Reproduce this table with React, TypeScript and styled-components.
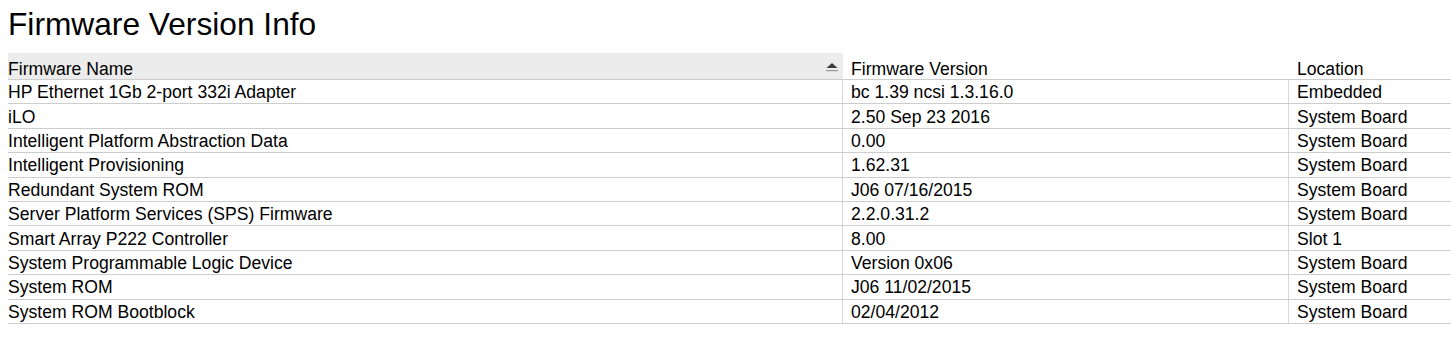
import React from "react";
import styled, { createGlobalStyle } from "styled-components";

const GlobalStyle = createGlobalStyle`
  html, body {
    margin: 0;
    padding: 0;
    background: #ffffff;
    overflow: hidden;
  }
  body {
    font-family: "Liberation Sans", Arial, sans-serif;
    color: #000;
  }
`;

const Page = styled.div`
  padding: 6px 0 0 8px;
  width: 1443px;
`;

const Title = styled.h1`
  margin: 0;
  font-size: 31.7px;
  font-weight: 400;
  line-height: 37px;
  color: #000;
`;

const Table = styled.div`
  margin-top: 10px;
  width: 1443px;
  display: flex;
  flex-direction: column;
`;

const Row = styled.div<{ $header?: boolean }>`
  display: grid;
  grid-template-columns: 835px 446px 1fr;
  height: ${(p) => (p.$header ? "27px" : "24.4px")};
  box-sizing: border-box;
  border-bottom: 1px solid #cdcdcd;
`;

const HeadCell = styled.div<{ $sorted?: boolean; $first?: boolean }>`
  display: flex;
  align-items: flex-end;
  justify-content: space-between;
  padding: 0 5px 0 ${(p) => (p.$first ? "0" : "8px")};
  background: ${(p) => (p.$sorted ? "#ececec" : "transparent")};
  font-size: 17.6px;
  line-height: 20px;
  white-space: nowrap;
`;

const SortIcon = styled.svg`
  align-self: center;
  margin-top: 3px;
  flex: none;
`;

const Cell = styled.div<{ $first?: boolean }>`
  display: flex;
  align-items: center;
  padding-left: ${(p) => (p.$first ? "0" : "8px")};
  border-left: ${(p) => (p.$first ? "none" : "1px solid #d6d6d6")};
  font-size: 17.6px;
  line-height: 20px;
  padding-top: 1px;
  white-space: nowrap;
  margin-left: ${(p) => (p.$first ? "0" : "-1px")};
`;

const rows: [string, string, string][] = [
  ["HP Ethernet 1Gb 2-port 332i Adapter", "bc 1.39 ncsi 1.3.16.0", "Embedded"],
  ["iLO", "2.50 Sep 23 2016", "System Board"],
  ["Intelligent Platform Abstraction Data", "0.00", "System Board"],
  ["Intelligent Provisioning", "1.62.31", "System Board"],
  ["Redundant System ROM", "J06 07/16/2015", "System Board"],
  ["Server Platform Services (SPS) Firmware", "2.2.0.31.2", "System Board"],
  ["Smart Array P222 Controller", "8.00", "Slot 1"],
  ["System Programmable Logic Device", "Version 0x06", "System Board"],
  ["System ROM", "J06 11/02/2015", "System Board"],
  ["System ROM Bootblock", "02/04/2012", "System Board"],
];

export default function App() {
  return (
    <>
      <GlobalStyle />
      <Page>
        <Title>Firmware Version Info</Title>
        <Table>
          <Row $header>
            <HeadCell $sorted $first>
              <span>Firmware Name</span>
              <SortIcon width="12" height="9" viewBox="0 0 12 9">
                <polygon points="6,0 0.5,5 11.5,5" fill="#3c3c3c" />
                <rect x="0" y="7" width="12" height="1.2" fill="#9a9a9a" />
              </SortIcon>
            </HeadCell>
            <HeadCell>Firmware Version</HeadCell>
            <HeadCell>Location</HeadCell>
          </Row>
          {rows.map(([name, ver, loc]) => (
            <Row key={name}>
              <Cell $first>{name}</Cell>
              <Cell>{ver}</Cell>
              <Cell>{loc}</Cell>
            </Row>
          ))}
        </Table>
      </Page>
    </>
  );
}
